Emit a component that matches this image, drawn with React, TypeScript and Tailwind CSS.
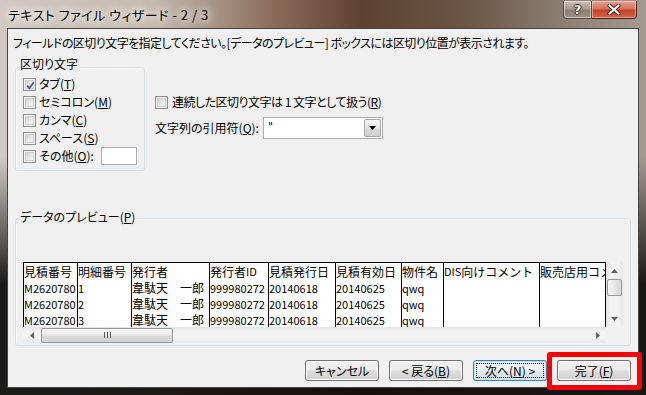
import React from "react";

const U = ({ children }: { children: React.ReactNode }) => (
  <span className="underline underline-offset-[1px] decoration-1">{children}</span>
);

function Box({ checked }: { checked?: boolean }) {
  return (
    <span className="w-[13px] h-[13px] shrink-0 border border-[#8e8f8f] bg-[#f4f4f4] p-[1px] flex">
      <span className="flex-1 border border-[#cfcfcf] bg-[linear-gradient(135deg,#cfcfcf_0%,#e6e6e6_50%,#f6f6f6_100%)] flex items-center justify-center relative">
        {checked && (
          <svg width="11" height="11" viewBox="0 0 11 11" className="absolute -left-[1px] -top-[1px]">
            <path d="M2.2 5.6 L4.4 8.2 L8.8 2.2" fill="none" stroke="#4a5e8e" strokeWidth="1.9" />
          </svg>
        )}
      </span>
    </span>
  );
}

function TitleBar() {
  return (
    <div className="h-[28px] flex items-start shrink-0">
      <div className="pl-[8px] pt-[7px] text-[13px] leading-[15px] tracking-[0.5px] whitespace-nowrap text-black [text-shadow:0_0_6px_#fff,0_0_10px_#fff,0_0_14px_#f4efe9]">
        テキスト ファイル ウィザード - 2 / 3
      </div>
      <div className="ml-auto mt-[1px] mr-[9px] flex">
        <div className="w-[29px] h-[18px] border border-[#5a4a40] border-t-0 rounded-bl-[4px] bg-[linear-gradient(to_bottom,#c9c0b8_0%,#a89c92_45%,#8a7d73_55%,#9f948b_100%)] flex items-center justify-center shadow-[inset_0_0_0_1px_rgba(255,255,255,0.45)]">
          <span className="text-white font-bold text-[13px] leading-none font-['DejaVu_Sans',sans-serif] [text-shadow:0_0_1px_#222,1px_0_0_#333,-1px_0_0_#333,0_1px_0_#333,0_-1px_0_#333]">?</span>
        </div>
        <div className="w-[45px] h-[18px] border border-[#4a1f16] border-t-0 border-l-0 rounded-br-[4px] bg-[linear-gradient(to_bottom,#e8a493_0%,#d5735c_45%,#c2432a_55%,#d2654a_100%)] flex items-center justify-center shadow-[inset_0_0_0_1px_rgba(255,220,210,0.5)]">
          <svg width="14" height="11" viewBox="0 0 14 11">
            <path d="M2.5 1.5 L11.5 9.5 M11.5 1.5 L2.5 9.5" stroke="#3b1a14" strokeWidth="4" strokeLinecap="round" />
            <path d="M2.5 1.5 L11.5 9.5 M11.5 1.5 L2.5 9.5" stroke="#ffffff" strokeWidth="2.2" strokeLinecap="round" />
          </svg>
        </div>
      </div>
    </div>
  );
}

const W = ["w-[54px]", "w-[54px]", "w-[78px]", "w-[59px]", "w-[67px]", "w-[66px]", "w-[42px]", "w-[96px]", "w-[66px]"];

const headers = ["見積番号", "明細番号", "発行者", "発行者ID", "見積発行日", "見積有効日", "物件名", "DIS向けコメント", "販売店用コメント"];
const rows = [
  ["M2620780", "1", "韋駄天　一郎", "999980272", "20140618", "20140625", "qwq", "", ""],
  ["M2620780", "2", "韋駄天　一郎", "999980272", "20140618", "20140625", "qwq", "", ""],
  ["M2620780", "3", "韋駄天　一郎", "999980272", "20140618", "20140625", "qwq", "", ""],
];

function Mix({ s }: { s: string }) {
  const parts = s.split(/([\x00-\x7f]+)/).filter((p) => p !== "");
  return (
    <>
      {parts.map((p, i) =>
        /^[\x00-\x7f]+$/.test(p) ? (
          <span key={i} className="text-[11px]">{p}</span>
        ) : (
          <span key={i} className="text-[12px]">{p}</span>
        )
      )}
    </>
  );
}

function TriUp() {
  return (
    <svg width="7" height="4" viewBox="0 0 7 4"><path d="M0 4 L3.5 0 L7 4 Z" fill="#606060" /></svg>
  );
}
function TriDown() {
  return (
    <svg width="7" height="4" viewBox="0 0 7 4"><path d="M0 0 L3.5 4 L7 0 Z" fill="#606060" /></svg>
  );
}
function TriLeft() {
  return (
    <svg width="4" height="7" viewBox="0 0 4 7"><path d="M4 0 L0 3.5 L4 7 Z" fill="#606060" /></svg>
  );
}
function TriRight() {
  return (
    <svg width="4" height="7" viewBox="0 0 4 7"><path d="M0 0 L4 3.5 L0 7 Z" fill="#606060" /></svg>
  );
}

function Preview() {
  return (
    <div className="w-[600px] h-[81px] flex flex-col">
      <div className="flex h-[65px]">
        <div className="w-[583px] h-[65px] bg-white border-l border-t border-black overflow-hidden [font-feature-settings:normal] leading-none">
          <div className="flex h-[17px]">
            {headers.map((h, i) => (
              <div key={i} className={`${W[i]} shrink-0 h-full border-r border-black overflow-hidden whitespace-nowrap flex items-center`}>
                <Mix s={h} />
              </div>
            ))}
          </div>
          {rows.map((r, ri) => (
            <div key={ri} className="flex h-[16px]">
              {r.map((c, i) => (
                <div key={i} className={`${W[i]} shrink-0 h-full border-r border-black overflow-hidden whitespace-nowrap flex items-center`}>
                  <Mix s={c} />
                </div>
              ))}
            </div>
          ))}
        </div>
        <div className="w-[17px] h-[65px] bg-[linear-gradient(to_right,#e4e4e4,#f2f2f2_30%,#f2f2f2_70%,#e8e8e8)] flex flex-col items-center">
          <div className="h-[17px] flex items-center justify-center"><TriUp /></div>
          <div className="w-[15px] h-[17px] rounded-[2px] border border-[#979797] bg-[linear-gradient(to_right,#f5f5f5,#e6e6e6_50%,#d7d7d7)]" />
          <div className="mt-auto h-[16px] flex items-center justify-center"><TriDown /></div>
        </div>
      </div>
      <div className="flex h-[16px]">
        <div className="w-[583px] h-[16px] bg-[linear-gradient(to_bottom,#e4e4e4,#f2f2f2_30%,#f2f2f2_70%,#e8e8e8)] flex items-center">
          <div className="w-[17px] flex justify-center"><TriLeft /></div>
          <div className="ml-[1px] w-[132px] h-[15px] rounded-[2px] border border-[#979797] bg-[linear-gradient(to_bottom,#f7f7f7,#ebebeb_45%,#dadada_55%,#d2d2d2)] flex items-center justify-center gap-[2px]">
            <span className="w-px h-[6px] bg-[#5c5c5c]" />
            <span className="w-px h-[6px] bg-[#5c5c5c]" />
            <span className="w-px h-[6px] bg-[#5c5c5c]" />
          </div>
          <div className="ml-auto w-[17px] flex justify-center"><TriRight /></div>
        </div>
        <div className="w-[17px] h-[16px] bg-[#f0f0f0]" />
      </div>
    </div>
  );
}

function Btn({ children, focused }: { children: React.ReactNode; focused?: boolean }) {
  if (focused) {
    return (
      <div className="w-[74px] h-[21px] rounded-[3px] border border-[#3c7fb1] bg-[linear-gradient(to_bottom,#f4f9fc_0%,#edf4f9_45%,#dfe9f1_55%,#d5e2ec_100%)] shadow-[inset_0_0_0_1px_#bde4f9] flex p-[2px]">
        <div className="flex-1 border border-dotted border-black flex items-center justify-center whitespace-nowrap">
          {children}
        </div>
      </div>
    );
  }
  return (
    <div className="w-[74px] h-[21px] rounded-[3px] border border-[#707070] bg-[linear-gradient(to_bottom,#f2f2f2_0%,#ebebeb_45%,#dddddd_55%,#cfcfcf_100%)] shadow-[inset_0_0_0_1px_#fcfcfc] flex items-center justify-center whitespace-nowrap">
      {children}
    </div>
  );
}

function Client() {
  return (
    <div className="mx-[7px] h-[360px] border border-[#454545] bg-[#f0f0f0] flex flex-col shrink-0">
      <div className="mt-[7px] ml-[5px] h-[14px] whitespace-nowrap tracking-[-0.55px]">
        フィールドの区切り文字を指定してください。[データのプレビュー] ボックスには区切り位置が表示されます。
      </div>
      <div className="mt-[17px] ml-[7px] flex">
        <div className="w-[130px] h-[104px] border border-[#d5dfe5] rounded-[3px] relative pt-[7px] pl-[7px] shadow-[inset_1px_1px_0_#ffffff]">
          <span className="absolute -top-[11px] left-[3px] px-[1px] bg-[#f0f0f0] leading-[14px] whitespace-nowrap">区切り文字</span>
          <div className="h-[18px] flex items-center gap-[3px]"><Box checked /><span>タブ(<U>T</U>)</span></div>
          <div className="h-[18px] flex items-center gap-[3px]"><Box /><span>セミコロン(<U>M</U>)</span></div>
          <div className="h-[18px] flex items-center gap-[3px]"><Box /><span>カンマ(<U>C</U>)</span></div>
          <div className="h-[18px] flex items-center gap-[3px]"><Box /><span>スペース(<U>S</U>)</span></div>
          <div className="h-[18px] flex items-center gap-[3px]">
            <Box />
            <span>その他(<U>O</U>):</span>
            <div className="ml-auto mr-[7px] w-[36px] h-[18px] border border-[#abadb3] bg-white" />
          </div>
        </div>
        <div className="ml-[10px] flex flex-col">
          <div className="mt-[26px] h-[18px] flex items-center gap-[4px]">
            <Box />
            <span className="whitespace-nowrap tracking-[-0.5px]">連続した区切り文字は 1 文字として扱う(<U>R</U>)</span>
          </div>
          <div className="mt-[6px] h-[22px] flex items-center">
            <span className="w-[108px] whitespace-nowrap">文字列の引用符(<U>Q</U>):</span>
            <div className="w-[120px] h-[22px] border border-[#abadb3] bg-white flex">
              <span className="pl-[4px] pt-[2px] leading-[14px] font-['DejaVu_Sans',sans-serif] text-[11px]">"</span>
              <div className="ml-auto my-[1px] mr-[1px] w-[17px] border border-[#a7a7a7] rounded-[2px] bg-[linear-gradient(to_bottom,#f5f5f5,#e8e8e8_50%,#d9d9d9_55%,#d0d0d0)] flex items-center justify-center">
                <svg width="7" height="4" viewBox="0 0 7 4"><path d="M0 0 L3.5 4 L7 0 Z" fill="#000" /></svg>
              </div>
            </div>
          </div>
        </div>
      </div>
      <div className="mt-[47px] ml-[7px] w-[616px] h-[128px] border border-[#d5dfe5] rounded-[3px] relative pt-[43px] pl-[7px] shadow-[inset_1px_1px_0_#ffffff]">
        <span className="absolute -top-[9px] left-[3px] px-[1px] bg-[#f0f0f0] leading-[14px] whitespace-nowrap">データのプレビュー(<U>P</U>)</span>
        <Preview />
      </div>
      <div className="mt-[14px] pr-[7px] flex justify-end gap-[10px]">
        <Btn>キャンセル</Btn>
        <Btn>&lt; 戻る(<U>B</U>)</Btn>
        <Btn focused>次へ(<U>N</U>) &gt;</Btn>
        <Btn>完了(<U>F</U>)</Btn>
      </div>
    </div>
  );
}

export default function App() {
  return (
    <div className="relative w-[646px] h-[395px] overflow-hidden flex flex-col font-['Noto_Sans_CJK_JP',sans-serif] text-[12px] leading-[14px] text-black [font-feature-settings:'palt'] bg-[linear-gradient(to_bottom,rgba(0,0,0,0)_0%,rgba(0,0,0,0)_40%,rgba(14,14,14,0.93)_72%),linear-gradient(to_right,#d2cac2_0%,#c4b9ae_24%,#8b6e5a_42%,#5e4230_56%,#6b5545_72%,#8e8075_88%,#a39a91_100%)]">
      <TitleBar />
      <Client />
      <div className="absolute left-[547px] top-[352px] w-[95px] h-[38px] border-[5px] border-[#ff0000] rounded-[3px]" />
    </div>
  );
}
